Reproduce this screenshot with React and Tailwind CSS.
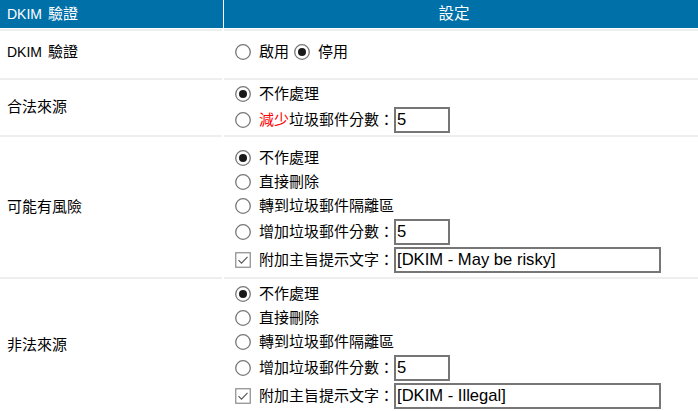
import React from "react";

function Radio({ checked }) {
  return (
    <svg width="16" height="16" viewBox="0 0 16 16" className="shrink-0">
      <circle cx="8" cy="8" r="7.3" fill="#fff" stroke="#767676" strokeWidth="1.3" />
      {checked && <circle cx="8" cy="8" r="4" fill="#1a1a1a" />}
    </svg>
  );
}

function Check() {
  return (
    <svg width="16" height="16" viewBox="0 0 16 16" className="shrink-0">
      <rect x="0.75" y="0.75" width="14.5" height="14.5" fill="#fff" stroke="#8a8a8a" strokeWidth="1.2" />
      <polyline points="3.5,8.2 6.5,11.2 12.5,4.8" fill="none" stroke="#555" strokeWidth="1.1" />
    </svg>
  );
}

function Item({ children, h = "h-[24px]" }) {
  return <div className={`flex items-center ${h}`}>{children}</div>;
}

function Input({ value, w }) {
  return (
    <div
      className={`${w} h-[26px] border-2 border-[#767676] bg-white flex items-center pl-[1px] text-[16.6px] font-['Liberation_Sans',sans-serif] text-black`}
    >
      {value}
    </div>
  );
}

function OptionList({ spam }) {
  return (
    <>
      <Item>
        <Radio checked />
        <span className="ml-[8px]">不作處理</span>
      </Item>
      <Item>
        <Radio />
        <span className="ml-[8px]">直接刪除</span>
      </Item>
      <Item>
        <Radio />
        <span className="ml-[8px]">轉到垃圾郵件隔離區</span>
      </Item>
      <Item h="h-[28px]">
        <Radio />
        <span className="ml-[8px]">增加垃圾郵件分數：</span>
        <Input value="5" w="w-[56px]" />
      </Item>
      <Item h="h-[28px]">
        <Check />
        <span className="ml-[8px]">附加主旨提示文字：</span>
        <div className="h-[27px] flex items-center">
          <Input value={spam} w="w-[267px]" />
        </div>
      </Item>
    </>
  );
}

function Row({ label, labelTop, heightClass, rightPad, children }) {
  return (
    <div className={`flex ${heightClass}`}>
      <div
        className={`w-[222px] border-t-2 border-[#eeeeee] pl-[7px] flex ${
          labelTop ? "items-start pt-[9px]" : "items-center"
        }`}
      >
        <div className="h-[24px] flex items-center">{label}</div>
      </div>
      <div className="w-[2px]" />
      <div className={`flex-1 border-t-2 border-[#eeeeee] pl-[11px] flex flex-col ${rightPad}`}>
        {children}
      </div>
    </div>
  );
}

function DkimLabel() {
  return (
    <>
      <span className="text-[14px]">DKIM</span>
      <span className="ml-[6px]">驗證</span>
    </>
  );
}

export default function App() {
  return (
    <div className="w-[698px] h-[411px] overflow-hidden bg-white text-black text-[15px] font-['Liberation_Sans','Noto_Sans_CJK_TC',sans-serif]">
      <div className="flex h-[28px] bg-[#0070a8] text-white">
        <div className="w-[223px] pl-[7px] flex items-center">
          <DkimLabel />
        </div>
        <div className="w-px bg-white" />
        <div className="flex-1 flex items-center justify-center pr-[14px] text-[15.5px]">設定</div>
      </div>
      <div className="h-[1px]" />

      <Row heightClass="h-[49px]" labelTop rightPad="pt-[9px]" label={<DkimLabel />}>
        <Item>
          <Radio />
          <span className="ml-[8px]">啟用</span>
          <span className="ml-[5px]">
            <Radio checked />
          </span>
          <span className="ml-[8px]">停用</span>
        </Item>
      </Row>

      <Row heightClass="h-[57px]" rightPad="pt-[2px]" label="合法來源">
        <Item>
          <Radio checked />
          <span className="ml-[8px]">不作處理</span>
        </Item>
        <Item h="h-[28px]">
          <Radio />
          <span className="ml-[8px]">
            <span className="text-[#ff0000]">減少</span>垃圾郵件分數：
          </span>
          <Input value="5" w="w-[56px]" />
        </Item>
      </Row>

      <Row heightClass="h-[142px]" rightPad="pt-[9px]" label="可能有風險">
        <OptionList spam="[DKIM - May be risky]" />
      </Row>

      <Row heightClass="h-[134px]" rightPad="pt-[3px]" label="非法來源">
        <OptionList spam="[DKIM - Illegal]" />
      </Row>
    </div>
  );
}
